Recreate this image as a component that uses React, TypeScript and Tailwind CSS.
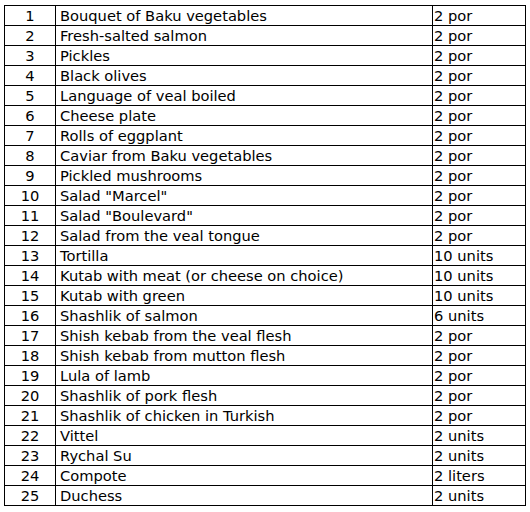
const rows: [string, string][] = [
  ["Bouquet of Baku vegetables", "2 por"],
  ["Fresh-salted salmon", "2 por"],
  ["Pickles", "2 por"],
  ["Black olives", "2 por"],
  ["Language of veal boiled", "2 por"],
  ["Cheese plate", "2 por"],
  ["Rolls of eggplant", "2 por"],
  ["Caviar from Baku vegetables", "2 por"],
  ["Pickled mushrooms", "2 por"],
  ['Salad "Marcel"', "2 por"],
  ['Salad "Boulevard"', "2 por"],
  ["Salad from the veal tongue", "2 por"],
  ["Tortilla", "10 units"],
  ["Kutab with meat (or cheese on choice)", "10 units"],
  ["Kutab with green", "10 units"],
  ["Shashlik of salmon", "6 units"],
  ["Shish kebab from the veal flesh", "2 por"],
  ["Shish kebab from mutton flesh", "2 por"],
  ["Lula of lamb", "2 por"],
  ["Shashlik of pork flesh", "2 por"],
  ["Shashlik of chicken in Turkish", "2 por"],
  ["Vittel", "2 units"],
  ["Rychal Su", "2 units"],
  ["Compote", "2 liters"],
  ["Duchess", "2 units"],
];

export default function App() {
  return (
    <main className="w-[530px] h-[512px] bg-white pt-[5px] pl-[4px] font-['DejaVu_Sans',Verdana,sans-serif] text-[14.67px] text-black">
      <table className="w-[522px] table-fixed border-collapse border border-black">
        <colgroup>
          <col className="w-[51px]" />
          <col className="w-[377px]" />
          <col />
        </colgroup>
        <tbody>
          {rows.map(([name, qty], i) => (
            <tr key={i} className="h-[20px]">
              <td className="border border-black p-0 text-center leading-[19px]">{i + 1}</td>
              <td className="border border-black py-0 pl-[4px] leading-[19px] whitespace-nowrap">{name}</td>
              <td className="border border-black py-0 pl-[1px] leading-[19px] whitespace-nowrap">{qty}</td>
            </tr>
          ))}
        </tbody>
      </table>
    </main>
  );
}
